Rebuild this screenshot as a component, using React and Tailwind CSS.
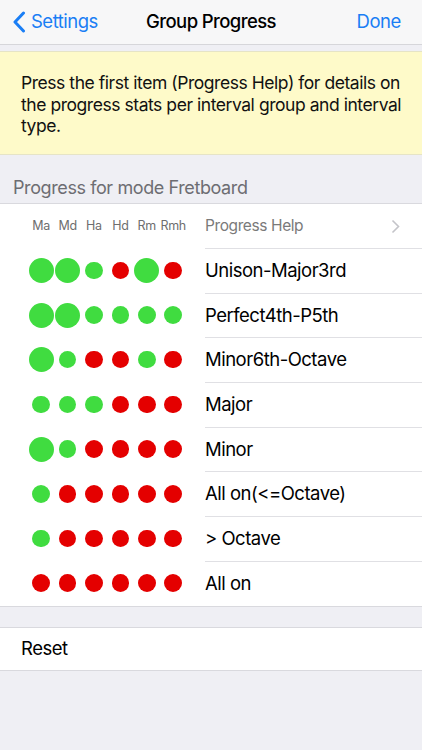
import React from "react";

const G = "bg-[#40dc40]";
const R = "bg-[#e40000]";

const rows = [
  { label: "Unison-Major3rd", dots: ["G", "G", "g", "r", "G", "r"] },
  { label: "Perfect4th-P5th", dots: ["G", "G", "g", "g", "g", "g"] },
  { label: "Minor6th-Octave", dots: ["G", "g", "r", "r", "g", "r"] },
  { label: "Major", dots: ["g", "g", "g", "r", "r", "r"] },
  { label: "Minor", dots: ["G", "g", "r", "r", "r", "r"] },
  { label: "All on(<=Octave)", dots: ["g", "r", "r", "r", "r", "r"] },
  { label: "> Octave", dots: ["g", "r", "r", "r", "r", "r"] },
  { label: "All on", dots: ["r", "r", "r", "r", "r", "r"] },
];

const cols = ["Ma", "Md", "Ha", "Hd", "Rm", "Rmh"];

const Dot = ({ kind }) => {
  const big = kind === "G";
  const color = kind === "r" ? R : G;
  return (
    <div className="w-[26.4px] flex justify-center">
      <div
        className={`${color} rounded-full ${big ? "w-[25px] h-[25px]" : "w-[17.5px] h-[17.5px]"}`}
      />
    </div>
  );
};

export default function App() {
  return (
    <div
      className="w-[422px] h-[750px] bg-[#efeff4] overflow-hidden"
      style={{ fontFamily: "Inter, 'Noto Sans', sans-serif" }}
    >
      {/* nav bar */}
      <div className="h-[45px] bg-[#f7f7f8] border-b border-[#d6d6da] flex items-center relative">
        <div className="flex items-center pl-[12px] text-[#1a7ef5] text-[18.5px] tracking-[-0.5px]">
          <svg width="14" height="22" viewBox="0 0 14 22" className="mr-[5px]">
            <path
              d="M11.5 2 L3 11 L11.5 20"
              fill="none"
              stroke="#1a7ef5"
              strokeWidth="3"
              strokeLinecap="round"
              strokeLinejoin="round"
            />
          </svg>
          <span>Settings</span>
        </div>
        <div className="absolute left-0 right-0 text-center text-[18.5px] font-medium text-black pointer-events-none tracking-[-0.6px]">
          Group Progress
        </div>
        <div className="ml-auto pr-[21px] text-[18.5px] text-[#1a7ef5] tracking-[-0.4px]">Done</div>
      </div>

      <div className="h-[6px]" />

      {/* info box */}
      <div className="bg-[#fefac9] border-t border-b border-[#e6e4c6] h-[104px] pl-[21px] pr-[8px] pt-[20px] text-[17.5px] leading-[21.5px] text-[#111] tracking-[-0.45px]">
        Press the first item (Progress Help) for details on the progress stats per interval group and interval type.
      </div>

      {/* section header */}
      <div className="h-[48px] flex items-end pb-[2px] pl-[13px] text-[18px] text-[#6d6d72] tracking-[-0.4px]">
        Progress for mode Fretboard
      </div>

      {/* list */}
      <div className="bg-white border-t border-b border-[#d9d9de]">
        <div className="h-[44px] flex items-center">
          <div className="w-[205px] pl-[28px] flex shrink-0">
            {cols.map((c) => (
              <div key={c} className="w-[26.4px] text-center text-[12.5px] text-[#6e6e6e] tracking-[-0.3px]">
                {c}
              </div>
            ))}
          </div>
          <div className="flex-1 flex items-center pr-[22px]">
            <span className="text-[15.5px] text-[#7a7a7a] tracking-[-0.4px]">Progress Help</span>
            <svg width="9" height="15" viewBox="0 0 9 15" className="ml-auto">
              <path
                d="M1.5 1.5 L7.5 7.5 L1.5 13.5"
                fill="none"
                stroke="#c4c4c9"
                strokeWidth="1.6"
              />
            </svg>
          </div>
        </div>
        {rows.map((r) => (
          <div key={r.label} className="h-[44.7px] flex">
            <div className="w-[205px] pl-[28px] flex items-center shrink-0">
              {r.dots.map((d, i) => (
                <Dot key={i} kind={d} />
              ))}
            </div>
            <div className="flex-1 border-t border-[#e0e0e4] flex items-center text-[18.5px] text-black tracking-[-0.5px]">
              {r.label}
            </div>
          </div>
        ))}
      </div>

      <div className="h-[20px]" />

      <div className="bg-white border-t border-b border-[#d9d9de] h-[44px] flex items-center pl-[21px] text-[18.5px] text-black tracking-[-0.5px]">
        Reset
      </div>
    </div>
  );
}
